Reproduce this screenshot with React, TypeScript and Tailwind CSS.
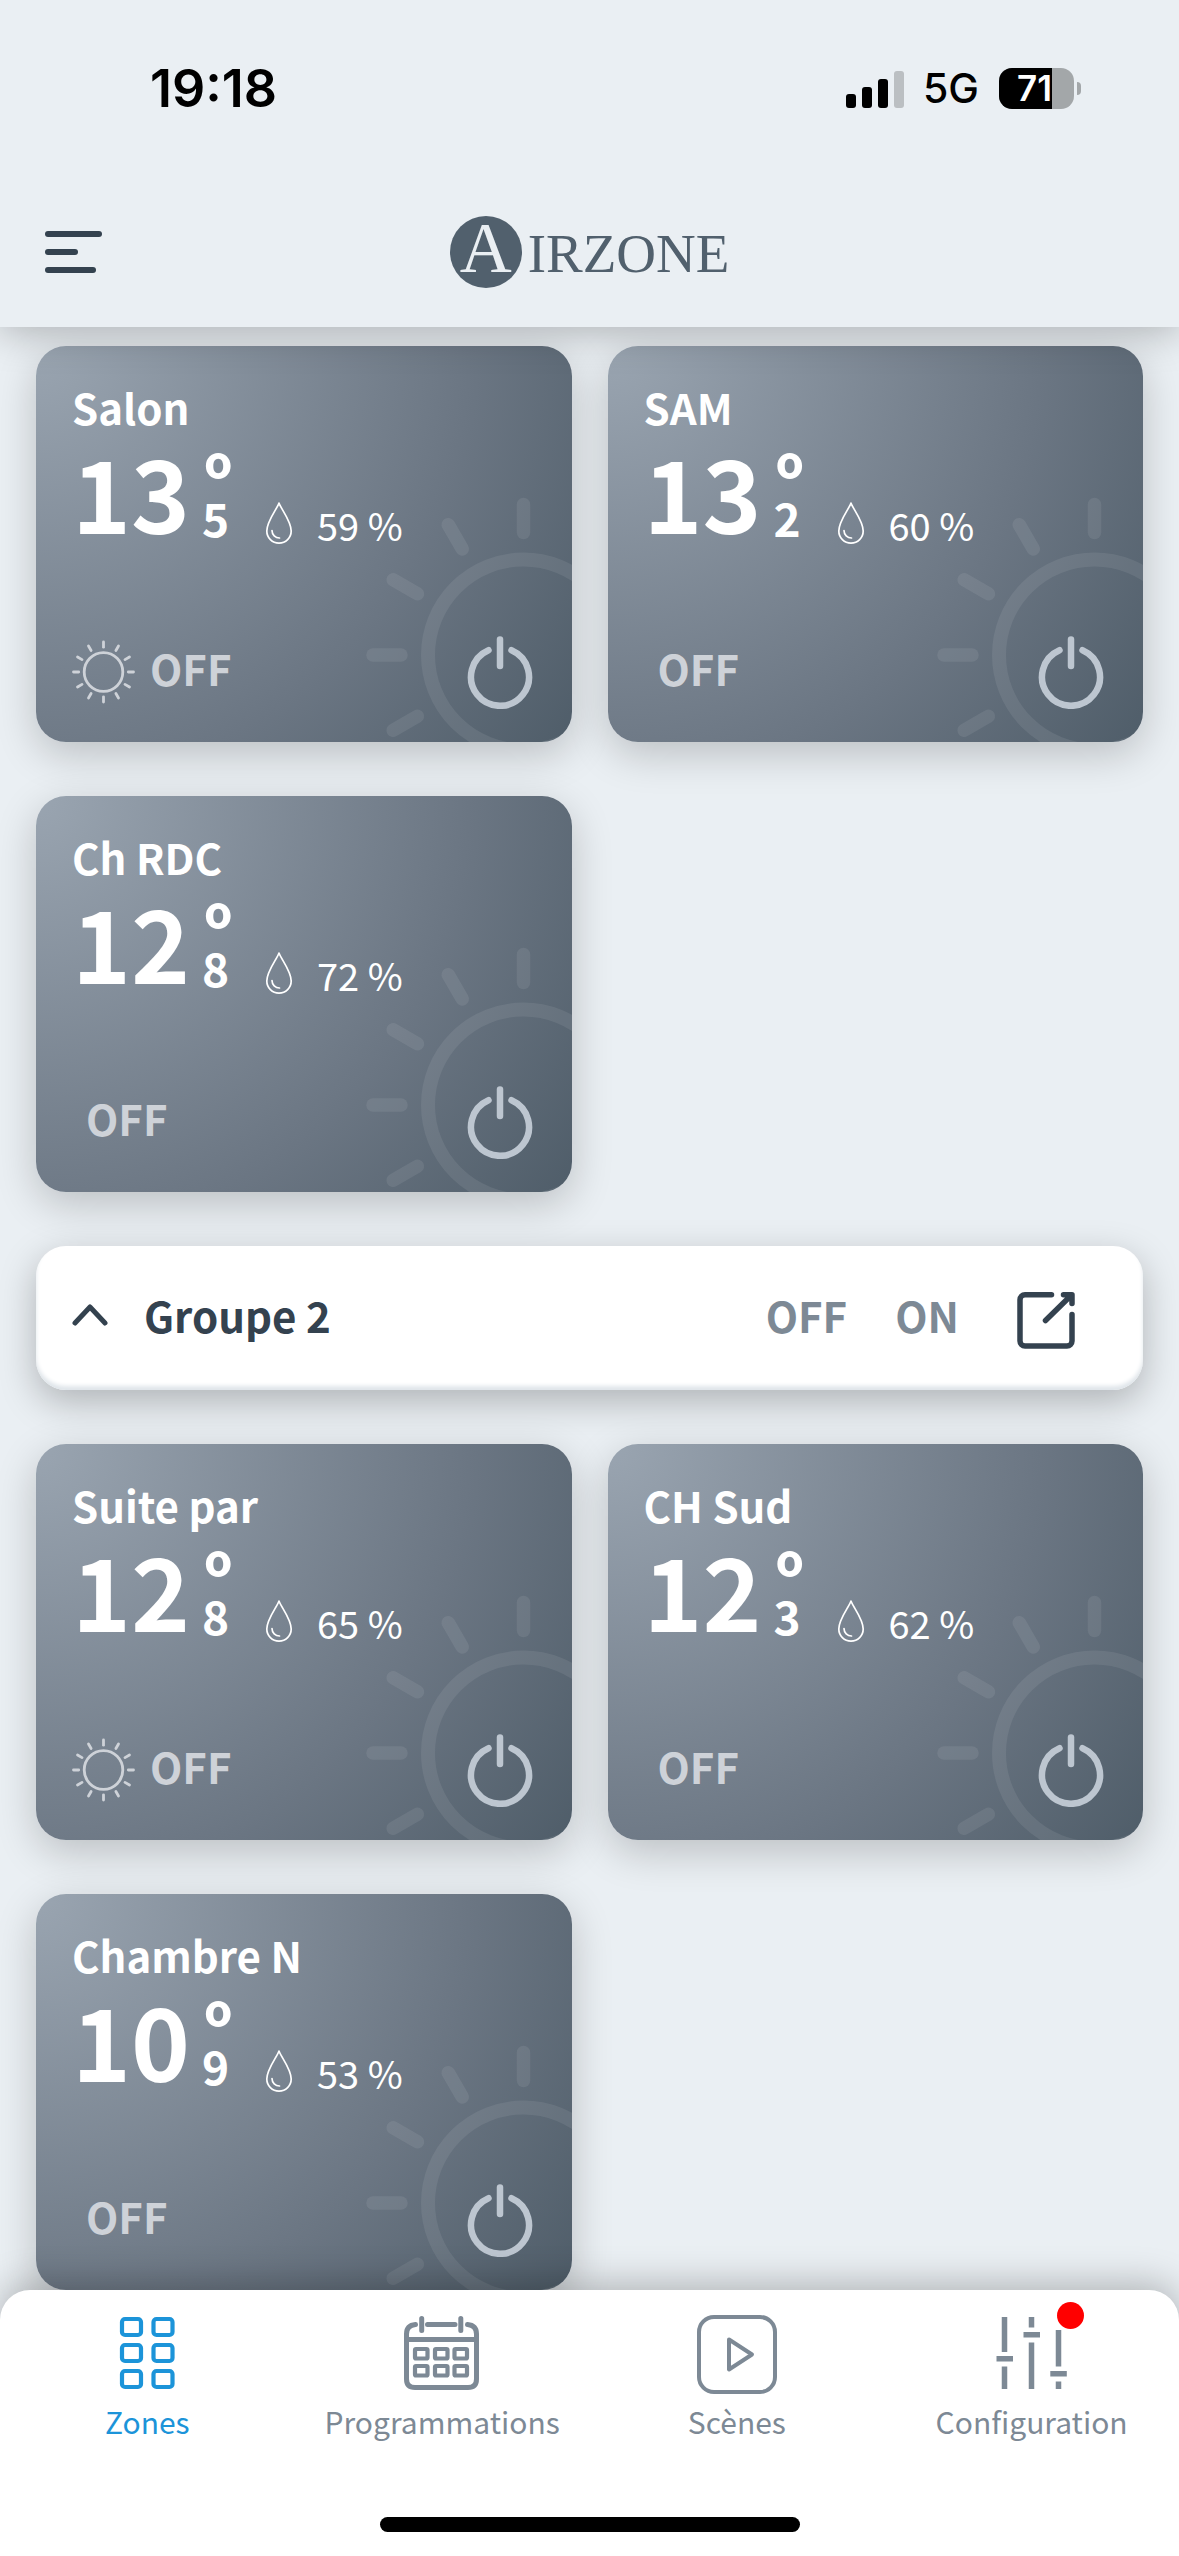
type Zone = {
  name: string
  degrees: string
  decimal: string
  humidity: string
  heating?: boolean
}

type NavItem = {
  label: string
  icon: () => React.JSX.Element
  active?: boolean
  badge?: boolean
}

const GROUP_ONE: Zone[] = [
  { name: 'Salon', degrees: '13', decimal: '5', humidity: '59 %', heating: true },
  { name: 'SAM', degrees: '13', decimal: '2', humidity: '60 %' },
  { name: 'Ch RDC', degrees: '12', decimal: '8', humidity: '72 %' },
]

const GROUP_TWO: Zone[] = [
  { name: 'Suite par', degrees: '12', decimal: '8', humidity: '65 %', heating: true },
  { name: 'CH Sud', degrees: '12', decimal: '3', humidity: '62 %' },
  { name: 'Chambre N', degrees: '10', decimal: '9', humidity: '53 %' },
]

const RAY_ANGLES = [0, 30, 60, 90, 120, 150, 180, 210, 240, 270, 300, 330]

function SignalIcon() {
  return (
    <svg className="h-[38px] w-[58px]" viewBox="0 0 58 38" aria-hidden="true">
      <rect x="0" y="24" width="10" height="14" rx="3" />
      <rect x="16" y="17" width="10" height="21" rx="3" />
      <rect x="32" y="9" width="10" height="29" rx="3" />
      <rect x="48" y="1" width="10" height="37" rx="3" fill="#bbbfc2" />
    </svg>
  )
}

function BatteryLevel({ level }: { level: number }) {
  return (
    <div className="flex items-center gap-[3px]">
      <div className="relative flex h-[41px] w-[75px] items-center justify-center overflow-hidden rounded-[13px] bg-[#a3a7a9] pr-1">
        <div className="absolute inset-y-0 left-0 bg-black" style={{ width: `${level}%` }} />
        <span className="relative text-[35px] leading-none font-semibold text-white">{level}</span>
      </div>
      <div className="h-[13px] w-1 rounded-r-full bg-[#a3a7a9]" />
    </div>
  )
}

function BigSun() {
  return (
    <svg
      className="absolute -right-28 -bottom-[73px] size-80"
      viewBox="0 0 320 320"
      fill="none"
      stroke="#fff"
      strokeOpacity="0.08"
      aria-hidden="true"
    >
      <circle cx="159.500" cy="160" r="95.500" strokeWidth="14" />
      {RAY_ANGLES.map((angle) => (
        <path
          key={angle}
          d="M159.500 37.500V9.500"
          strokeWidth="13.500"
          strokeLinecap="round"
          transform={`rotate(${angle} 159.500 160)`}
        />
      ))}
    </svg>
  )
}

function SunIcon() {
  return (
    <svg
      className="size-16"
      viewBox="0 0 64 64"
      fill="none"
      stroke="#ced2d8"
      strokeWidth="2.800"
      strokeLinecap="round"
      aria-hidden="true"
    >
      <circle cx="31.500" cy="32" r="19.300" />
      {RAY_ANGLES.map((angle) => (
        <path key={angle} d="M31.500 7.200V2" transform={`rotate(${angle} 31.500 32)`} />
      ))}
    </svg>
  )
}

function DropIcon() {
  return (
    <svg
      className="h-11 w-7"
      viewBox="0 0 28 44"
      fill="none"
      stroke="#fff"
      strokeWidth="1.700"
      strokeLinecap="round"
      strokeLinejoin="round"
      aria-hidden="true"
    >
      <path d="M14 2C12 8 1.800 20 1.800 30a12.200 12.200 0 0 0 24.400 0C26.200 20 16 8 14 2Z" />
      <path d="M7 29.500a7.500 7.500 0 0 0 7.500 7.500" />
    </svg>
  )
}

function PowerIcon() {
  return (
    <svg
      className="h-[74px] w-[66px]"
      viewBox="0 0 66 74"
      fill="none"
      stroke="#bdc6d0"
      strokeWidth="6.500"
      strokeLinecap="round"
      aria-hidden="true"
    >
      <path d="M33 4.500V31" />
      <path d="M21.500 15.200A29 29 0 1 0 44.500 15.200" />
    </svg>
  )
}

function ZonesIcon() {
  return (
    <svg className="size-20" viewBox="0 0 80 80" fill="none" stroke="currentColor" strokeWidth="4.200" aria-hidden="true">
      {[5, 31, 57].map((y) => (
        <g key={y}>
          <rect x="15" y={y} width="19" height="16" rx="3" />
          <rect x="46.500" y={y} width="19" height="16" rx="3" />
        </g>
      ))}
    </svg>
  )
}

function CalendarIcon() {
  return (
    <svg
      className="size-20"
      viewBox="0 0 80 80"
      fill="none"
      stroke="currentColor"
      strokeWidth="5"
      strokeLinecap="round"
      aria-hidden="true"
    >
      <path d="M13.500 10.500C7.500 11 4.500 14 4.500 20V65c0 5.500 3 8.500 8.500 8.500h53c5.500 0 8.500-3 8.500-8.500V20c0-6-3-9-9-9.500" />
      <path d="M25.500 10.500h27.500M19.700 4.500v12M58.800 4.500v12M5 25.500h69" />
      {[35, 52].map((y) => (
        <g key={y} strokeWidth="4.200">
          <rect x="13" y={y} width="12.500" height="9.500" rx="1" />
          <rect x="33" y={y} width="12.500" height="9.500" rx="1" />
          <rect x="52.500" y={y} width="12.500" height="9.500" rx="1" />
        </g>
      ))}
    </svg>
  )
}

function ScenesIcon() {
  return (
    <svg
      className="size-20"
      viewBox="0 0 80 80"
      fill="none"
      stroke="currentColor"
      strokeWidth="4"
      strokeLinejoin="round"
      aria-hidden="true"
    >
      <rect x="2" y="3" width="76" height="75" rx="15" />
      <path d="M32 25.500 55 40.500 32 55.500Z" />
    </svg>
  )
}

function ConfigurationIcon() {
  return (
    <svg className="size-20" viewBox="0 0 80 80" fill="none" stroke="currentColor" strokeWidth="5.500" aria-hidden="true">
      <path d="M12.500 3v35M12.500 52.500V75M4.500 44.700h16.500" />
      <path d="M39.500 3v10.500M39.500 28.500V75M31.500 20.700H48" />
      <path d="M66.500 16v36.500M66.500 67.500V75M58.300 59.700h16.500" />
    </svg>
  )
}

function ZoneCard({ zone }: { zone: Zone }) {
  return (
    <article className="relative flex h-[396px] flex-col overflow-hidden rounded-[30px] bg-[radial-gradient(circle_at_top_left,#9aa5b1,#6b7683_65%,#4f5d69)] px-9 pt-[37px] pb-[33px] text-white">
      <BigSun />
      <h2 className="text-[42px] leading-12 font-bold">{zone.name}</h2>
      <div className="flex">
        <span className="text-[100px] leading-[120px] font-bold">{zone.degrees}</span>
        <div className="ml-3 flex w-7 flex-col pt-8 font-bold">
          <span className="ml-0.5 text-[68px] leading-8">º</span>
          <span className="text-[46px] leading-11">{zone.decimal}</span>
        </div>
        <div className="ml-[35px] flex items-end gap-6 pb-1.5">
          <DropIcon />
          <span className="text-[38px] leading-10">{zone.humidity}</span>
        </div>
      </div>
      <div className="mt-auto flex items-center justify-between">
        <div className="flex items-center">
          {zone.heating ? <SunIcon /> : null}
          <span className="ml-3.5 pb-2 text-[42px] leading-12 font-bold text-[#ced2d8]">OFF</span>
        </div>
        <button type="button" aria-label={`Allumer ${zone.name}`} className="relative mr-[3px]">
          <PowerIcon />
        </button>
      </div>
    </article>
  )
}

function ZoneGrid({ zones }: { zones: Zone[] }) {
  return (
    <div className="grid grid-cols-2 gap-x-9 gap-y-[54px]">
      {zones.map((zone) => (
        <div key={zone.name} className="rounded-[30px] shadow-[0_12px_42px_rgba(0,0,0,0.2)]">
          <ZoneCard zone={zone} />
        </div>
      ))}
    </div>
  )
}

function GroupBar() {
  return (
    <section className="flex h-36 items-center rounded-[30px] bg-white pr-[68px] pl-9 text-[42px] leading-12 font-bold text-[#34424f] shadow-[0_12px_36px_rgba(0,0,0,0.25),inset_0_-4px_4px_#dfe5ea]">
      <button type="button" className="flex items-center gap-9 pb-1.5">
        <svg className="h-6 w-9" viewBox="0 0 36 24" fill="none" stroke="currentColor" strokeWidth="5" aria-hidden="true">
          <path d="M3 20 18 4l15 16" strokeLinecap="round" strokeLinejoin="round" />
        </svg>
        Groupe 2
      </button>
      <div className="ml-auto flex items-center gap-12 text-[#7d8995]">
        <button type="button" className="pb-1.5">
          OFF
        </button>
        <button type="button" className="pb-1.5">
          ON
        </button>
        <button type="button" aria-label="Ouvrir Groupe 2" className="ml-2.5 pt-1.5 text-[#34424f]">
          <svg
            className="size-[58px]"
            viewBox="0 0 58 58"
            fill="none"
            stroke="currentColor"
            strokeWidth="5.500"
            strokeLinecap="round"
            strokeLinejoin="round"
            aria-hidden="true"
          >
            <path d="M34.500 2.800H8a5 5 0 0 0-5 5V49a5 5 0 0 0 5 5h42a5 5 0 0 0 5-5V22.500" />
            <path d="M28.500 28.500 54 3.500M46.500 2.800H55V11.500" />
          </svg>
        </button>
      </div>
    </section>
  )
}

const NAV_ITEMS: NavItem[] = [
  { label: 'Zones', icon: ZonesIcon, active: true },
  { label: 'Programmations', icon: CalendarIcon },
  { label: 'Scènes', icon: ScenesIcon },
  { label: 'Configuration', icon: ConfigurationIcon, badge: true },
]

export default function App() {
  return (
    <div className="flex min-h-screen flex-col bg-[#eaeff3] font-['Noto_Sans_CJK_JP',sans-serif]">
      <header className="sticky top-0 z-10 bg-[#eaeff3] shadow-[0_6px_36px_rgba(0,0,0,0.25)]">
        <div className="flex h-[177px] items-center justify-between pr-[98px] pl-[150px] font-['Inter',sans-serif] text-black">
          <span className="text-[52px] font-semibold">19:18</span>
          <div className="flex items-center">
            <SignalIcon />
            <span className="mr-5 ml-[19px] text-[41px] font-medium">5G</span>
            <BatteryLevel level={71} />
          </div>
        </div>
        <div className="grid h-[150px] grid-cols-[1fr_auto_1fr] items-center px-[45px]">
          <button type="button" aria-label="Menu" className="flex flex-col gap-3 justify-self-start">
            <span className="h-1.5 w-[57px] rounded-full bg-[#34424f]" />
            <span className="h-1.5 w-[33px] rounded-full bg-[#34424f]" />
            <span className="h-1.5 w-[51px] rounded-full bg-[#34424f]" />
          </button>
          <h1 className="flex items-center gap-1.5 font-['Liberation_Serif',serif] text-[#51606d]">
            <span className="flex size-[72px] items-center justify-center rounded-full bg-[#51606d] pb-2 text-[72px] leading-[60px] text-[#eaeff3]">
              A
            </span>
            <span className="pt-1 text-[55px] leading-[72px]">IRZONE</span>
          </h1>
        </div>
      </header>

      <main className="flex flex-1 flex-col gap-[54px] px-9 pt-[19px]">
        <ZoneGrid zones={GROUP_ONE} />
        <GroupBar />
        <ZoneGrid zones={GROUP_TWO} />
      </main>

      <nav className="sticky bottom-0 z-10 rounded-t-[30px] bg-white pt-6 shadow-[0_-6px_36px_rgba(0,0,0,0.25)]">
        <div className="grid grid-cols-4">
          {NAV_ITEMS.map(({ label, icon: Icon, active, badge }) => (
            <a
              key={label}
              href="#"
              className={`flex flex-col items-center gap-[3px] text-[30px] leading-12 ${active ? 'text-[#1c94d9]' : 'text-[#7d8995]'}`}
            >
              <span className="relative">
                <Icon />
                {badge ? (
                  <span className="absolute -top-3 -right-3 size-[27px] rounded-full bg-[#ff0000]" />
                ) : null}
              </span>
              {label}
            </a>
          ))}
        </div>
        <div className="mx-auto mt-[72px] mb-6 h-[15px] w-[420px] rounded-full bg-black" />
      </nav>
    </div>
  )
}
